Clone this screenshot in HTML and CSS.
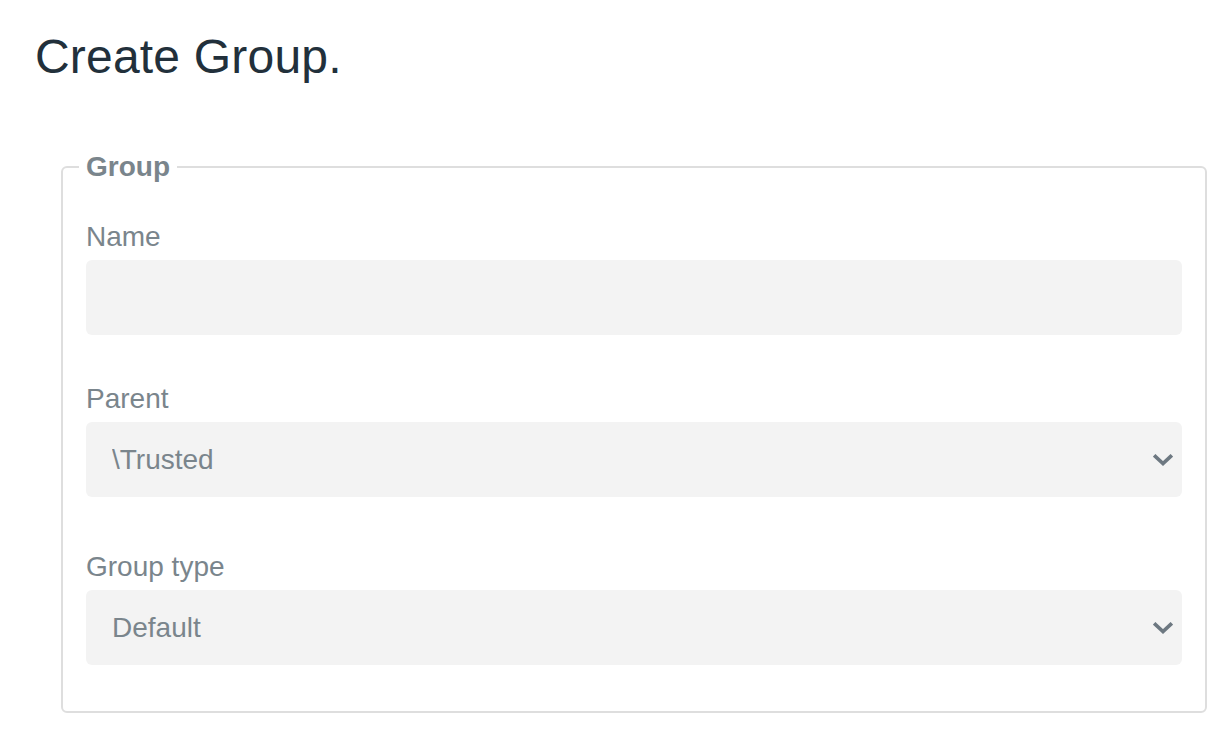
FILE: index.html
```html
<!DOCTYPE html>
<html lang="en">
<head>
<meta charset="utf-8">
<title>Create Group.</title>
<link rel="stylesheet" href="styles.css">
</head>
<body>
<main class="page">
  <h1 class="title">Create Group.</h1>
  <form class="form">
    <fieldset class="box">
      <legend class="box-legend">Group</legend>
      <div class="field field-first">
        <label class="field-label" for="name">Name</label>
        <input class="field-input" id="name" type="text">
      </div>
      <div class="field field-second">
        <label class="field-label" for="parent">Parent</label>
        <div class="select-wrap">
          <select class="field-input field-select" id="parent">
            <option>\Trusted</option>
          </select>
          <svg class="chevron" width="20" height="12" viewBox="0 0 20 12" aria-hidden="true"><polyline points="2.5,2.5 10,9.5 17.5,2.5" fill="none" stroke="#6d7881" stroke-width="3.6" stroke-linecap="square" stroke-linejoin="miter"/></svg>
        </div>
      </div>
      <div class="field">
        <label class="field-label" for="type">Group type</label>
        <div class="select-wrap">
          <select class="field-input field-select" id="type">
            <option>Default</option>
          </select>
          <svg class="chevron" width="20" height="12" viewBox="0 0 20 12" aria-hidden="true"><polyline points="2.5,2.5 10,9.5 17.5,2.5" fill="none" stroke="#6d7881" stroke-width="3.6" stroke-linecap="square" stroke-linejoin="miter"/></svg>
        </div>
      </div>
    </fieldset>
  </form>
</main>
</body>
</html>
```

FILE: styles.css
```css
* { box-sizing: border-box; }

html, body {
  margin: 0;
  padding: 0;
  background: #ffffff;
}

body {
  font-family: "Liberation Sans", Arial, Helvetica, sans-serif;
  color: #7a858c;
}

.page {
  padding: 29px 25px 0 35px;
}

.title {
  margin: 0;
  font-size: 48px;
  font-weight: 400;
  line-height: 55px;
  color: #22303b;
  letter-spacing: 0.2px;
}

.form {
  margin: 67px 0 0 26px;
}

.box {
  margin: 0;
  border: 2px solid #dedede;
  border-radius: 6px;
  padding: 38px 23px 46px 23px;
  display: flex;
  flex-direction: column;
  min-width: 0;
}

.box-legend {
  font-size: 28px;
  font-weight: 700;
  line-height: 32px;
  color: #7a858c;
  padding: 0 7px;
  margin-left: -7px;
}

.field {
  display: flex;
  flex-direction: column;
  gap: 7px;
}

.field-first {
  margin-bottom: 48px;
}

.field-second {
  margin-bottom: 54px;
}

.field-label {
  font-size: 28px;
  line-height: 32px;
  color: #7a858c;
}

.field-input {
  display: block;
  width: 100%;
  height: 75px;
  border: none;
  border-radius: 6px;
  background: #f3f3f3;
  font-family: inherit;
  font-size: 28px;
  color: #7a858c;
  padding: 0 60px 0 26px;
  outline: none;
}

.field-select {
  appearance: none;
  -webkit-appearance: none;
}

.select-wrap {
  position: relative;
}

.chevron {
  position: absolute;
  right: 9px;
  top: 32px;
  pointer-events: none;
}
```
